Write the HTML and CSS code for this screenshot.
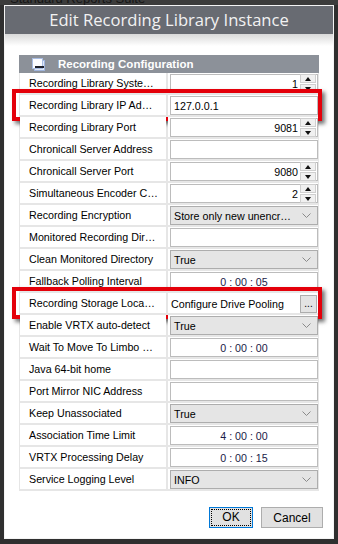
FILE: index.html
```html
<!DOCTYPE html>
<html>

<head>
	<meta charset="UTF-8">
	<title>Edit Recording Library Instance</title>
	<link rel="stylesheet" href="styles.css">
</head>

<body>
	<div class="behind"><span>Standard Reports Suite</span></div>

	<div class="dialog">
		<div class="titlebar">Edit Recording Library Instance</div>

		<div class="body">
			<div class="grid">
				<div class="group">
					<svg class="collapse" width="13" height="13" viewBox="0 0 13 13">
						<rect x="2.5" y="2.5" width="10" height="10" fill="#dfe7f6" stroke="#9fb4dc" />
						<rect x="0.5" y="0.5" width="10" height="10" fill="#fbfcff" stroke="#a9bde3" />
						<rect x="3" y="8" width="9" height="2" fill="#1c1f2a" />
					</svg>
					Recording Configuration
				</div>

				<div class="row">
					<div class="label">Recording Library Syste…</div>
					<div class="value"><div class="box spin"><span>1</span><i class="arrows"><b class="up"></b><b class="down"></b></i></div></div>
				</div>
				<div class="row">
					<div class="label">Recording Library IP Ad…</div>
					<div class="value"><div class="box">127.0.0.1</div></div>
					<div class="highlight"></div>
				</div>
				<div class="row">
					<div class="label">Recording Library Port</div>
					<div class="value"><div class="box spin"><span>9081</span><i class="arrows"><b class="up"></b><b class="down"></b></i></div></div>
				</div>
				<div class="row">
					<div class="label">Chronicall Server Address</div>
					<div class="value"><div class="box"></div></div>
				</div>
				<div class="row">
					<div class="label">Chronicall Server Port</div>
					<div class="value"><div class="box spin"><span>9080</span><i class="arrows"><b class="up"></b><b class="down"></b></i></div></div>
				</div>
				<div class="row">
					<div class="label">Simultaneous Encoder C…</div>
					<div class="value"><div class="box spin"><span>2</span><i class="arrows"><b class="up"></b><b class="down"></b></i></div></div>
				</div>
				<div class="row">
					<div class="label">Recording Encryption</div>
					<div class="value"><div class="box select">Store only new unencr…<svg class="chev" width="9" height="5" viewBox="0 0 9 5"><polyline points="0.5,0.5 4.5,4.5 8.5,0.5" fill="none" stroke="#8a8a8a" /></svg></div></div>
				</div>
				<div class="row">
					<div class="label">Monitored Recording Dir…</div>
					<div class="value"><div class="box"></div></div>
				</div>
				<div class="row">
					<div class="label">Clean Monitored Directory</div>
					<div class="value"><div class="box select">True<svg class="chev" width="9" height="5" viewBox="0 0 9 5"><polyline points="0.5,0.5 4.5,4.5 8.5,0.5" fill="none" stroke="#8a8a8a" /></svg></div></div>
				</div>
				<div class="row">
					<div class="label">Fallback Polling Interval</div>
					<div class="value"><div class="box time">0 : 00 : 05</div></div>
				</div>
				<div class="row">
					<div class="label">Recording Storage Loca…</div>
					<div class="value"><div class="plain">Configure Drive Pooling<span class="more">...</span></div></div>
					<div class="highlight"></div>
				</div>
				<div class="row">
					<div class="label">Enable VRTX auto-detect</div>
					<div class="value"><div class="box select">True<svg class="chev" width="9" height="5" viewBox="0 0 9 5"><polyline points="0.5,0.5 4.5,4.5 8.5,0.5" fill="none" stroke="#8a8a8a" /></svg></div></div>
				</div>
				<div class="row">
					<div class="label">Wait To Move To Limbo …</div>
					<div class="value"><div class="box time">0 : 00 : 00</div></div>
				</div>
				<div class="row">
					<div class="label">Java 64-bit home</div>
					<div class="value"><div class="box"></div></div>
				</div>
				<div class="row">
					<div class="label">Port Mirror NIC Address</div>
					<div class="value"><div class="box"></div></div>
				</div>
				<div class="row">
					<div class="label">Keep Unassociated</div>
					<div class="value"><div class="box select">True<svg class="chev" width="9" height="5" viewBox="0 0 9 5"><polyline points="0.5,0.5 4.5,4.5 8.5,0.5" fill="none" stroke="#8a8a8a" /></svg></div></div>
				</div>
				<div class="row">
					<div class="label">Association Time Limit</div>
					<div class="value"><div class="box time">4 : 00 : 00</div></div>
				</div>
				<div class="row">
					<div class="label">VRTX Processing Delay</div>
					<div class="value"><div class="box time">0 : 00 : 15</div></div>
				</div>
				<div class="row">
					<div class="label">Service Logging Level</div>
					<div class="value"><div class="box select">INFO<svg class="chev" width="9" height="5" viewBox="0 0 9 5"><polyline points="0.5,0.5 4.5,4.5 8.5,0.5" fill="none" stroke="#8a8a8a" /></svg></div></div>
				</div>
			</div>

			<div class="footer">
				<button class="btn ok"><span>OK</span></button>
				<button class="btn cancel">Cancel</button>
			</div>
		</div>
	</div>
</body>

</html>
```

FILE: styles.css
```css
html,
body {
	margin: 0;
	padding: 0;
	height: 100%;
}

body {
	background: #2f2f2f;
	font-family: "Liberation Sans", Arial, sans-serif;
	font-size: 10.7px;
	color: #000;
	overflow: hidden;
}

/* window behind the dialog */
.behind {
	height: 5px;
	overflow: hidden;
	background: #3c3c3c;
	padding-left: 10px;
}

.behind span {
	display: block;
	margin-top: -9px;
	font-size: 13px;
	color: #151515;
}

.dialog {
	width: 330px;
	height: 534px;
	margin-left: 4px;
	box-sizing: border-box;
	border: 1px solid #f4f4f4;
	background: #fff;
}

.titlebar {
	height: 28px;
	line-height: 27px;
	background: #686b72;
	color: #f2f2f2;
	text-align: center;
	font-family: "Open Sans", sans-serif;
	font-size: 16.6px;
}

.body {
	padding-top: 21px;
	background: linear-gradient(#d9d9d9, #fff 12px);
}

.grid {
	width: 300px;
	margin-left: 14px;
	background: #e6e6e6;
}

.group {
	display: flex;
	align-items: center;
	height: 18px;
	background: #8c9199;
	color: #fff;
	font-weight: bold;
	font-size: 11.5px;
}

.collapse {
	margin: 0 13px 0 13px;
}

.row {
	position: relative;
	display: flex;
	gap: 2px;
	height: 20px;
	padding: 0 1px 2px 1px;
}

.label {
	width: 146px;
	background: #fff;
	padding-left: 9px;
	box-sizing: border-box;
	line-height: 20px;
	white-space: nowrap;
	overflow: hidden;
}

.value {
	flex: 1;
	background: #fff;
	padding: 1px 0 0 2px;
}

.box {
	display: flex;
	align-items: center;
	height: 19px;
	box-sizing: border-box;
	border: 1px solid #bcbcbc;
	padding: 0 3px;
	background: #fff;
	white-space: nowrap;
}

.spin {
	justify-content: flex-end;
	padding-right: 1px;
}

.spin span {
	margin-right: 2px;
}

.arrows {
	display: flex;
	flex-direction: column;
	gap: 1px;
}

.arrows b {
	position: relative;
	display: block;
	width: 14px;
	height: 7px;
	background: #f0f0f0;
	border: 1px solid #cfcfcf;
	box-sizing: content-box;
}

.arrows b::after {
	content: "";
	position: absolute;
	left: 4px;
	border-left: 3px solid transparent;
	border-right: 3px solid transparent;
}

.arrows .up::after {
	top: 2px;
	border-bottom: 4px solid #111;
}

.arrows .down::after {
	top: 2px;
	border-top: 4px solid #111;
}

.select {
	justify-content: space-between;
	background: #e5e5e5;
	border-color: #adadad;
	padding-right: 6px;
}

.time {
	justify-content: center;
	color: #1a1a48;
}

.plain {
	display: flex;
	align-items: center;
	justify-content: space-between;
	height: 19px;
	padding: 0 1px 0 1px;
	white-space: nowrap;
}

.more {
	width: 15px;
	height: 16px;
	line-height: 16px;
	text-align: center;
	background: #e3e3e3;
	border: 1px solid #adadad;
	font-size: 10px;
}

.highlight {
	position: absolute;
	top: -6px;
	bottom: -4px;
	left: -7px;
	right: -3px;
	border: 4px solid #e4000a;
	box-shadow: 3px 3px 4px rgba(0, 0, 0, 0.55);
	pointer-events: none;
}

.footer {
	display: flex;
	justify-content: flex-end;
	gap: 8px;
	padding: 16px 10px 0 0;
}

.btn {
	height: 21px;
	margin: 0;
	padding: 0;
	background: #e1e1e1;
	border: 1px solid #adadad;
	font-family: "Liberation Sans", Arial, sans-serif;
	font-size: 12px;
	color: #000;
}

.ok {
	width: 44px;
	border-color: #0078d7;
	padding: 1px;
}

.ok span {
	display: block;
	height: 100%;
	box-sizing: border-box;
	border: 1px dotted #000;
	line-height: 15px;
}

.cancel {
	width: 62px;
}
```
